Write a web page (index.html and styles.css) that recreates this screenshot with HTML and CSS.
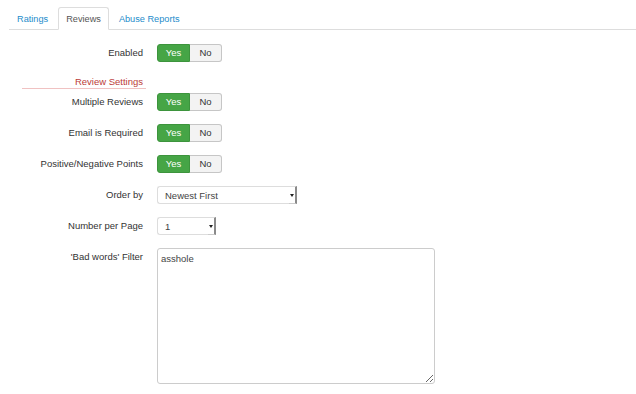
FILE: index.html
```
<!DOCTYPE html>
<html lang="en">
<head>
    <meta charset="UTF-8">
    <meta name="viewport" content="width=device-width, initial-scale=1.0">
    <title>Reviews</title>
    <link rel="stylesheet" href="styles.css">
</head>
<body>
    <ul class="tabs">
        <li class="tab"><a href="#">Ratings</a></li>
        <li class="tab active"><a href="#">Reviews</a></li>
        <li class="tab"><a href="#">Abuse Reports</a></li>
    </ul>

    <div class="form">
        <div class="row">
            <label class="label">Enabled</label>
            <div class="btn-group">
                <span class="btn btn-yes">Yes</span>
                <span class="btn btn-no">No</span>
            </div>
        </div>

        <div class="heading"><span>Review Settings</span></div>

        <div class="row">
            <label class="label">Multiple Reviews</label>
            <div class="btn-group">
                <span class="btn btn-yes">Yes</span>
                <span class="btn btn-no">No</span>
            </div>
        </div>
        <div class="row">
            <label class="label">Email is Required</label>
            <div class="btn-group">
                <span class="btn btn-yes">Yes</span>
                <span class="btn btn-no">No</span>
            </div>
        </div>
        <div class="row">
            <label class="label">Positive/Negative Points</label>
            <div class="btn-group">
                <span class="btn btn-yes">Yes</span>
                <span class="btn btn-no">No</span>
            </div>
        </div>
        <div class="row">
            <label class="label">Order by</label>
            <div class="select select-wide">
                <span class="select-text">Newest First</span>
                <span class="select-arrow"></span>
            </div>
        </div>
        <div class="row">
            <label class="label">Number per Page</label>
            <div class="select select-narrow">
                <span class="select-text">1</span>
                <span class="select-arrow"></span>
            </div>
        </div>
        <div class="row">
            <label class="label">'Bad words' Filter</label>
            <textarea class="textarea">asshole</textarea>
        </div>
    </div>
</body>
</html>
```

FILE: styles.css
```
body {
    margin: 0;
    font-family: "Liberation Sans", Arial, sans-serif;
    font-size: 9.5px;
    color: #333;
    background: #fff;
}
.tabs {
    display: flex;
    list-style: none;
    margin: 7px 0 0 9px;
    padding: 0;
    font-size: 9.2px;
    border-bottom: 1px solid #ddd;
}
.tab {
    margin-right: 2px;
    margin-bottom: -1px;
}
.tab a {
    display: block;
    padding: 0 7px;
    height: 21px;
    line-height: 23px;
    color: #1e8ccb;
    text-decoration: none;
    border: 1px solid transparent;
    border-radius: 3px 3px 0 0;
}
.tab.active a {
    color: #555;
    background: #fff;
    border-color: #ddd #ddd #fff;
}
.form {
    padding-top: 14px;
}
.row {
    display: grid;
    grid-template-columns: 143px auto;
    column-gap: 14px;
    align-items: start;
    justify-items: start;
    margin-bottom: 13px;
}
.label {
    justify-self: end;
    line-height: 18px;
}
.btn-group {
    display: flex;
}
.btn {
    height: 16px;
    line-height: 16px;
    text-align: center;
    border: 1px solid #c6c6c6;
    background: #f3f3f3;
    color: #333;
}
.btn-yes {
    width: 31px;
    background: #46a546;
    border-color: #3d943d;
    color: #fff;
    border-radius: 3px 0 0 3px;
}
.btn-no {
    width: 31px;
    border-left: none;
    border-radius: 0 3px 3px 0;
}
.heading {
    margin: 0 0 4px 22px;
    padding-top: 1px;
    width: 124px;
    text-align: right;
    border-bottom: 1px solid #f0c2c2;
    line-height: 12px;
}
.heading span {
    display: inline-block;
    padding-right: 3px;
    color: #bb3b38;
}
.select {
    display: flex;
    align-items: center;
    height: 16px;
    border: 1px solid #ddd;
    border-right: none;
    border-radius: 3px 0 0 3px;
    background: #fff;
    box-sizing: content-box;
}
.select-wide {
    width: 139px;
}
.select-narrow {
    width: 58px;
}
.select-text {
    flex: 1;
    padding-left: 7px;
    color: #444;
}
.select-arrow {
    position: relative;
    width: 8px;
    height: 18px;
    margin-top: -1px;
    border-right: 2px solid #8a8a8a;
    border-top: 1px solid #ddd;
    border-bottom: 1px solid #ccc;
    box-sizing: border-box;
}
.select-arrow::after {
    content: "";
    position: absolute;
    left: 1px;
    top: 7px;
    border-left: 2px solid transparent;
    border-right: 2px solid transparent;
    border-top: 3px solid #222;
}
.textarea {
    width: 278px;
    height: 136px;
    box-sizing: border-box;
    margin: 0;
    padding: 4px 3px;
    border: 1px solid #ccc;
    border-radius: 3px;
    font-family: "Liberation Sans", Arial, sans-serif;
    font-size: 9.5px;
    color: #444;
    resize: both;
}
```
